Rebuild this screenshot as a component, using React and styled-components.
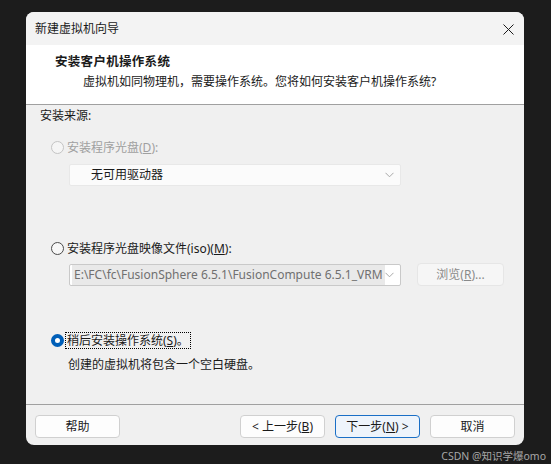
import React from 'react';
import styled, {createGlobalStyle} from "styled-components";

const Global = createGlobalStyle`
  html, body {
    margin: 0;
    padding: 0;
    background: #1c1c1c;
  }
  body {
    font-family: "Noto Sans", "Noto Sans CJK SC", sans-serif;
    font-size: 12px;
    color: #1a1a1a;
  }
`;

const Page = styled.div`
  width: 551px;
  height: 464px;
  padding: 12px 0 0 26px;
  box-sizing: border-box;
  display: flex;
  flex-direction: column;
`;

const Dialog = styled.div`
  width: 498px;
  height: 434px;
  background: #f0f0f0;
  border-radius: 8px;
  overflow: hidden;
  display: flex;
  flex-direction: column;
`;

const TitleBar = styled.div`
  height: 33px;
  flex: none;
  display: flex;
  align-items: center;
  justify-content: space-between;
  padding: 1px 10px 0 9px;
  box-sizing: border-box;
  background: #f3f3f3;
  line-height: 16px;
`;

const Header = styled.div`
  height: 60px;
  flex: none;
  background: #ffffff;
  border-bottom: 1px solid #a0a0a0;
  padding: 9px 0 0 29px;
  box-sizing: border-box;
`;

const HeaderTitle = styled.div`
  font-weight: bold;
  font-size: 12.5px;
  line-height: 16px;
  letter-spacing: 0.3px;
`;

const HeaderText = styled.div`
  margin: 4px 0 0 28px;
  line-height: 16px;
`;

const Body = styled.div`
  flex: 1;
  padding: 3px 0 0 14px;
  display: flex;
  flex-direction: column;
  align-items: flex-start;
`;

const Label = styled.div`
  line-height: 16px;
  margin-top: ${p => p.$top || 0}px;
  margin-left: ${p => p.$left || 0}px;
  color: ${p => p.$disabled ? "#a0a0a0" : "#1a1a1a"};
`;

const RadioRow = styled.div`
  display: flex;
  align-items: center;
  height: 16px;
  margin-top: ${p => p.$top}px;
  margin-left: 11px;
  color: ${p => p.$disabled ? "#a0a0a0" : "#1a1a1a"};
`;

const Radio = styled.span`
  width: 13px;
  height: 13px;
  box-sizing: border-box;
  border-radius: 50%;
  margin-right: 3px;
  flex: none;
  ${p => p.$checked ? `
    border: 4px solid #005fb8;
    background: #ffffff;
  ` : `
    border: 1px solid ${p.$disabled ? "#c4c4c4" : "#4a4a4a"};
    background: ${p.$disabled ? "#f5f5f5" : "#f7f7f7"};
  `}
`;

const Focus = styled.span`
  outline: 1px dotted #000;
  outline-offset: 0;
  padding: 0 1px;
  margin-left: -1px;
  line-height: 15px;
`;

const Select = styled.div`
  width: 332px;
  height: 22px;
  box-sizing: border-box;
  margin-top: ${p => p.$top}px;
  margin-left: 29px;
  display: flex;
  align-items: center;
  justify-content: space-between;
  background: ${p => p.$disabled ? "#fbfbfb" : "#ffffff"};
  border: 1px solid ${p => p.$disabled ? "#e8e8e8" : "#c9c9c9"};
  border-radius: 2px;
  padding: 0 6px 0 ${p => p.$pad}px;
`;

const SelectText = styled.span`
  color: ${p => p.$muted ? "#707070" : "#1a1a1a"};
  background: ${p => p.$muted ? "#e9e9e9" : "transparent"};
  line-height: 20px;
  padding: 0 ${p => p.$muted ? 2 : 0}px;
  white-space: nowrap;
`;

const Chevron = () => (
  <svg width="9" height="6" viewBox="0 0 9 6">
    <path d="M0.5 0.8 L4.5 4.8 L8.5 0.8" fill="none" stroke="#a8a8a8" strokeWidth="1"/>
  </svg>
);

const FileRow = styled.div`
  display: flex;
  align-items: center;
  margin-top: 7px;
`;

const Button = styled.button`
  width: ${p => p.$width || 85}px;
  height: 23px;
  box-sizing: border-box;
  font-family: inherit;
  font-size: 12px;
  padding: 0;
  border-radius: 4px;
  border: 1px solid ${p => p.$primary ? "#1a6fc6" : p.$disabled ? "#e6e6e6" : "#d0d0d0"};
  background: ${p => p.$primary ? "#eef4fb" : p.$disabled ? "#f6f6f6" : "#fdfdfd"};
  color: ${p => p.$disabled ? "#8a8a8a" : "#1a1a1a"};
  margin-left: ${p => p.$left || 0}px;
  line-height: 20px;
`;

const Footer = styled.div`
  height: 41px;
  flex: none;
  border-top: 1px solid #a0a0a0;
  display: flex;
  align-items: flex-start;
  padding: 10px 9px 0 9px;
  box-sizing: border-box;
`;

const Spacer = styled.div`
  flex: 1;
`;

const Watermark = styled.div`
  align-self: flex-end;
  margin: 3px 5px 0 0;
  color: #a8a8a8;
  font-size: 10.5px;
  line-height: 16px;
`;

const Close = () => (
  <svg width="11" height="11" viewBox="0 0 11 11">
    <path d="M0.5 0.5 L10.5 10.5 M10.5 0.5 L0.5 10.5" stroke="#1a1a1a" strokeWidth="1"/>
  </svg>
);

const App = () => {
    return (
        <Page>
            <Global/>
            <Dialog>
                <TitleBar>
                    <span>新建虚拟机向导</span>
                    <Close/>
                </TitleBar>
                <Header>
                    <HeaderTitle>安装客户机操作系统</HeaderTitle>
                    <HeaderText>虚拟机如同物理机，需要操作系统。您将如何安装客户机操作系统?</HeaderText>
                </Header>
                <Body>
                    <Label>安装来源:</Label>
                    <RadioRow $top={15} $disabled>
                        <Radio $disabled/>安装程序光盘(<u>D</u>):
                    </RadioRow>
                    <Select $top={9} $pad={21} $disabled>
                        <SelectText>无可用驱动器</SelectText>
                        <Chevron/>
                    </Select>
                    <RadioRow $top={54}>
                        <Radio/>安装程序光盘映像文件(iso)(<u>M</u>):
                    </RadioRow>
                    <FileRow>
                        <Select $top={0} $pad={2}>
                            <SelectText $muted>E:\FC\fc\FusionSphere 6.5.1\FusionCompute 6.5.1_VRM</SelectText>
                            <Chevron/>
                        </Select>
                        <Button $disabled $width={87} $left={16}>浏览(<u>R</u>)...</Button>
                    </FileRow>
                    <RadioRow $top={46}>
                        <Radio $checked/><Focus>稍后安装操作系统(<u>S</u>)。</Focus>
                    </RadioRow>
                    <Label $top={9} $left={28}>创建的虚拟机将包含一个空白硬盘。</Label>
                </Body>
                <Footer>
                    <Button>帮助</Button>
                    <Spacer/>
                    <Button>&lt; 上一步(<u>B</u>)</Button>
                    <Button $primary $left={10}>下一步(<u>N</u>) &gt;</Button>
                    <Button $left={10}>取消</Button>
                </Footer>
            </Dialog>
            <Watermark>CSDN @知识学爆omo</Watermark>
        </Page>
    );
};

export default App;
